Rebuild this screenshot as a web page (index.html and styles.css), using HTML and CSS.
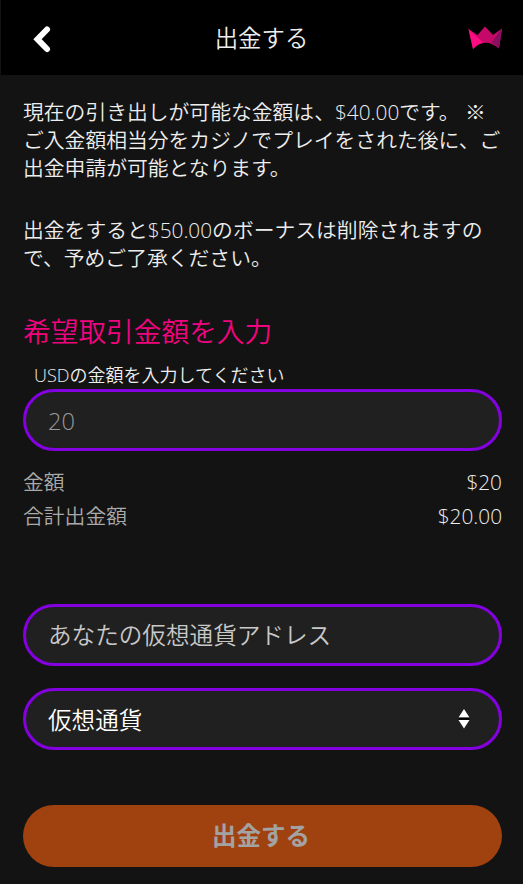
FILE: index.html
```html
<!DOCTYPE html>
<html lang="ja">
<head>
    <meta charset="UTF-8">
    <meta name="viewport" content="width=device-width, initial-scale=1.0">
    <title>出金する</title>
    <link rel="stylesheet" href="styles.css">
</head>
<body>
    <header class="topbar">
        <a class="back" href="#" aria-label="戻る">
            <svg width="24" height="32" viewBox="0 0 24 32">
                <path d="M18 7.5 L8.5 17.2 L18 27" fill="none" stroke="#fff" stroke-width="6" stroke-linecap="round"/>
            </svg>
        </a>
        <h1>出金する</h1>
        <svg class="crown" width="34" height="24" viewBox="0 0 34 24">
            <path d="M0.5 3 L9.5 9 L17 0.5 L25 9 L34 2.5 L31 22.5 Q17 11 5 23 Z" fill="#c60868"/>
            <path d="M0.5 3 L15 16.5 Q9 18 5 23 Z" fill="#ff0b82"/>
            <path d="M34 2.5 L23.5 16.5 Q28 18 31 22.5 Z" fill="#86105f"/>
        </svg>
    </header>
    <main>
        <p>現在の引き出しが可能な金額は、$40.00です。 ※<br>ご入金額相当分をカジノでプレイをされた後に、ご<br>出金申請が可能となります。</p>
        <p>出金をすると$50.00のボーナスは削除されますの<br>で、予めご了承ください。</p>

        <form>
            <h2>希望取引金額を入力</h2>
            <label for="amount">USDの金額を入力してください</label>
            <input class="field amount" id="amount" type="text" placeholder="20">

            <dl>
                <div class="row"><dt>金額</dt><dd>$20</dd></div>
                <div class="row"><dt>合計出金額</dt><dd>$20.00</dd></div>
            </dl>

            <input class="field address" type="text" placeholder="あなたの仮想通貨アドレス">
            <div class="field select" tabindex="0">
                <span>仮想通貨</span>
                <svg width="12" height="20" viewBox="0 0 12 20">
                    <path d="M6 0 L11.5 8.5 H0.5 Z M0.5 11 H11.5 L6 19.5 Z" fill="#fff"/>
                    <path d="M0.5 9.7 H11.5" stroke="#000" stroke-width="2"/>
                </svg>
            </div>
            <button type="submit">出金する</button>
        </form>
    </main>
</body>
</html>
```
FILE: styles.css
```css
* {
    box-sizing: border-box;
}
body {
    margin: 0;
    background-color: #131313;
    color: #eee;
    font-family: "Open Sans", "Noto Sans CJK JP", sans-serif;
    font-weight: 350;
}
.topbar {
    display: flex;
    justify-content: space-between;
    align-items: center;
    height: 75px;
    padding: 0 21px 0 28px;
    background-color: #000;
    border-left: 1px solid #131313;
}
.back, .crown {
    display: block;
}
.back {
    width: 26px;
    height: 32px;
}
h1 {
    margin: 0;
    font-size: 23.4px;
    font-weight: 350;
    line-height: 30px;
}
main {
    padding: 23px 21px 0 23px;
}
p {
    margin: 0 0 34px;
    font-size: 20.8px;
    line-height: 28px;
    white-space: nowrap;
}
h2 {
    margin: 0;
    padding-top: 8px;
    color: #f0047f;
    font-size: 27.7px;
    font-weight: 350;
    line-height: 34px;
}
label {
    display: block;
    margin: 15px 0 2px 11px;
    font-size: 18px;
    line-height: 24px;
}
.field {
    display: block;
    width: 100%;
    height: 62px;
    padding: 0 22px;
    border: 3px solid #8500e0;
    border-radius: 31px;
    background-color: #202020;
    color: #fff;
    font-family: inherit;
    font-size: 23.6px;
    font-weight: 350;
    outline: none;
}
.amount {
    padding-top: 2px;
}
.amount::placeholder {
    color: #999;
}
.address::placeholder {
    color: #c8c8c8;
}
dl {
    margin: 14px 0 71px;
    font-size: 20.8px;
}
.row {
    display: flex;
    justify-content: space-between;
    line-height: 34px;
}
dt {
    color: #aaa;
}
dd {
    margin: 0;
}
.select {
    display: flex;
    justify-content: space-between;
    align-items: center;
    margin-top: 22px;
    padding: 0 29px 1px 22px;
}
button {
    display: block;
    width: 100%;
    height: 62px;
    margin-top: 55px;
    padding: 0 3px 3px 0;
    border: none;
    border-radius: 31px;
    background-color: #a04210;
    color: #a3a3a3;
    font-family: inherit;
    font-size: 24.5px;
    font-weight: 600;
}
```
